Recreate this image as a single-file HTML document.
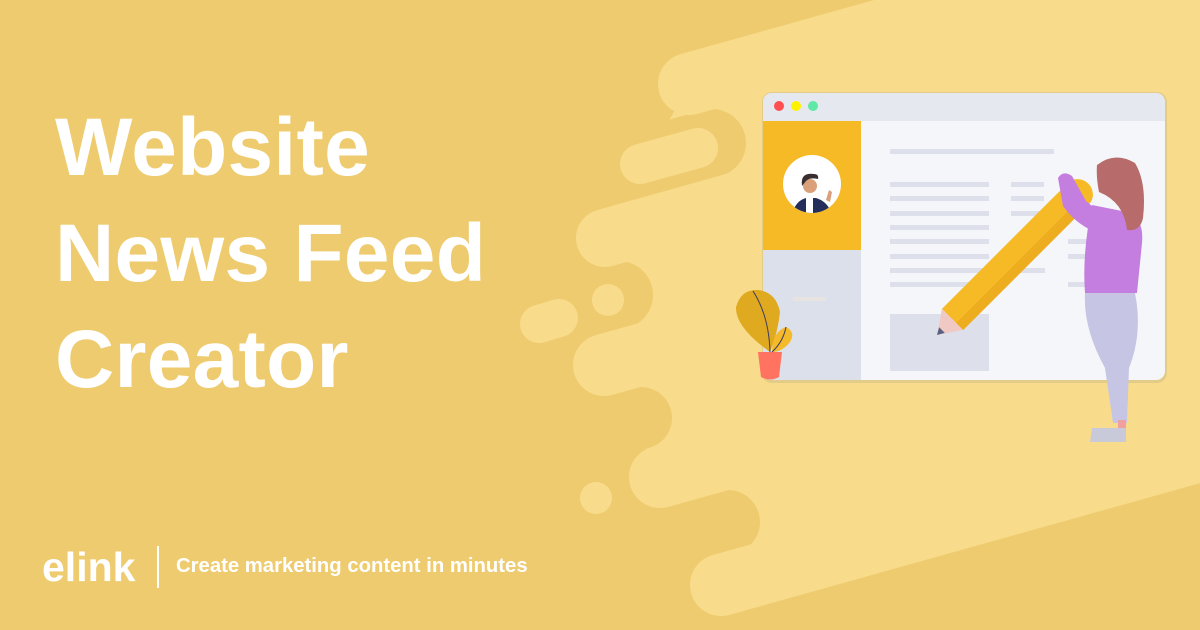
<!DOCTYPE html>
<html><head><style>
body{margin:0;width:1200px;height:630px;overflow:hidden;background:#EECB6F;font-family:"Liberation Sans",sans-serif;position:relative}
.t{position:absolute;left:55px;top:95px;color:#fff;font-weight:bold;font-size:82px;line-height:106px;letter-spacing:0.3px}
.foot{position:absolute;left:42px;top:545px;color:#fff;height:44px;width:600px}
</style></head><body>
<svg width="1200" height="630" style="position:absolute;left:0;top:0">
<path d="M689 53 L1250 -104 L1250 467 L721 616 L721 585 L660 477 L604 365 L605 238 L689 84 Z" fill="#F8DC8C"/>
<g stroke="#EECB6F" stroke-linecap="round" fill="none">
<line x1="712" y1="143" x2="0" y2="342" stroke-width="68"/>
<line x1="619" y1="295" x2="0" y2="468" stroke-width="68"/>
<line x1="641" y1="418" x2="0" y2="597" stroke-width="62"/>
<line x1="728" y1="522" x2="0" y2="726" stroke-width="64"/>
</g>
<g stroke="#F8DC8C" stroke-linecap="round" fill="none">
<line x1="689" y1="84" x2="1300" y2="-87" stroke-width="62"/>
<line x1="605" y1="238" x2="1300" y2="43" stroke-width="58"/>
<line x1="604" y1="365" x2="1300" y2="170" stroke-width="62"/>
<line x1="660" y1="477" x2="1300" y2="298" stroke-width="62"/>
<line x1="721" y1="585" x2="1300" y2="423" stroke-width="62"/>
<line x1="640" y1="164" x2="698" y2="148" stroke-width="40"/>
<line x1="539" y1="324" x2="559" y2="318" stroke-width="38"/>
</g>
<g fill="#F8DC8C"><circle cx="608" cy="300" r="16"/><circle cx="596" cy="498" r="16"/></g>
<!-- browser -->
<rect x="762" y="92" width="405" height="291" rx="10" fill="#E3CC88"/>
<rect x="763" y="93" width="402" height="287" rx="9" fill="#F5F6F9"/>
<path d="M772 93 h384 a9 9 0 0 1 9 9 v19 h-402 v-19 a9 9 0 0 1 9 -9z" fill="#E6E8F0"/>
<circle cx="779" cy="106" r="5" fill="#FF4F4F"/>
<circle cx="796" cy="106" r="5" fill="#FFF200"/>
<circle cx="813" cy="106" r="5" fill="#5FE8A6"/>
<rect x="763" y="121" width="98" height="129" fill="#F6BA26"/>
<path d="M763 250 h98 v130 h-90 a8 8 0 0 1 -8 -8z" fill="#DCE0EA"/>
<rect x="793" y="297" width="33" height="4" fill="#E6E3E0"/>
<circle cx="812" cy="184" r="29" fill="#fff"/>
<clipPath id="c"><circle cx="812" cy="184" r="29"/></clipPath>
<g clip-path="url(#c)">
<path d="M792 215 q3-14 14-17 l10 0 q10 3 14 12 l0 6z" fill="#252E5A"/>
<rect x="806" y="197" width="7" height="18" fill="#fff"/>
<circle cx="810" cy="186" r="7" fill="#D9A07A"/>
<path d="M802 186 q-2-14 12-12 q5 0 4 5 q-8-2 -12 2 z" fill="#3A2F30"/>
<path d="M826 200 l3 -10 l3 2 l-2 10z" fill="#D9A07A"/>
</g>
<g fill="#DDE0EA">
<rect x="890" y="149" width="164" height="5"/>
<rect x="890" y="182" width="99" height="5"/><rect x="1011" y="182" width="33" height="5"/>
<rect x="890" y="196" width="99" height="5"/><rect x="1011" y="196" width="33" height="5"/>
<rect x="890" y="211" width="99" height="5"/><rect x="1011" y="211" width="33" height="5"/>
<rect x="890" y="225" width="99" height="5"/>
<rect x="890" y="239" width="99" height="5"/><rect x="1068" y="239" width="20" height="5"/>
<rect x="890" y="254" width="99" height="5"/><rect x="1068" y="254" width="20" height="5"/>
<rect x="890" y="268" width="155" height="5"/>
<rect x="890" y="282" width="99" height="5"/><rect x="1068" y="282" width="20" height="5"/>
<rect x="890" y="314" width="99" height="57"/>
</g>
<!-- plant -->
<path d="M758 352 h24 l-3 25 q-9 5 -18 0z" fill="#FF7360"/>
<path d="M770 352 q-35-25 -34-45 q5-18 22-17 q18 2 22 22 q-2 20 -10 40z" fill="#DFAA20"/>
<path d="M772 352 q0-20 14-25 q10 5 4 15 q-8 10 -18 10z" fill="#F4BA2A"/>
<path d="M753 291 q16 25 17 61 M786 327 q-3 15 -14 25" stroke="#3D3A5A" stroke-width="1" fill="none"/>
<!-- pencil -->
<g transform="translate(937 335) rotate(-45)">
<rect x="22" y="-15" width="178" height="30" fill="#F6BA26"/>
<rect x="22" y="5" width="178" height="10" fill="#EEAD1E"/>
<path d="M22 -15 L0 0 L22 15z" fill="#F0C9C4"/>
<path d="M0 0 L7 -4 L7 4z" fill="#5A6180"/>
<ellipse cx="200" cy="0" rx="14" ry="15" fill="#F6BA26"/>
</g>
<!-- woman -->
<path d="M1058 178 q5-8 14-2 l14 25 l12 10 l-5 20 q-18 -8 -30 -25z" fill="#C47EDF"/>
<path d="M1092 205 l40 8 q12 10 10 30 l-5 50 h-52 q-3-40 7-88z" fill="#C47EDF"/>
<path d="M1085 293 h50 q8 40 -6 75 l-2 55 h-14 l-8 -55 q-22 -40 -20 -75z" fill="#C6C6E4"/>
<path d="M1092 428 h34 v14 h-36z" fill="#C8CADA"/>
<path d="M1097 165 q18-14 38-2 q12 20 8 55 q-3 14 -16 12 q-3-28 -28-38 q-3 -15 -2 -27z" fill="#B76B6B"/>
<path d="M1118 420 h8 v8 h-8z" fill="#F0A0A0"/>
</svg>
<div class="t">Website<br>News Feed<br>Creator</div>
<div class="foot">
<span style="position:absolute;left:0;top:0px;font-size:41px;font-weight:bold;line-height:44px">elink</span>
<span style="position:absolute;left:115px;top:1px;width:2px;height:42px;background:#fff"></span>
<span style="position:absolute;left:134px;top:10px;font-size:20.3px;font-weight:bold;white-space:nowrap">Create marketing content in minutes</span>
</div>
</body></html>
